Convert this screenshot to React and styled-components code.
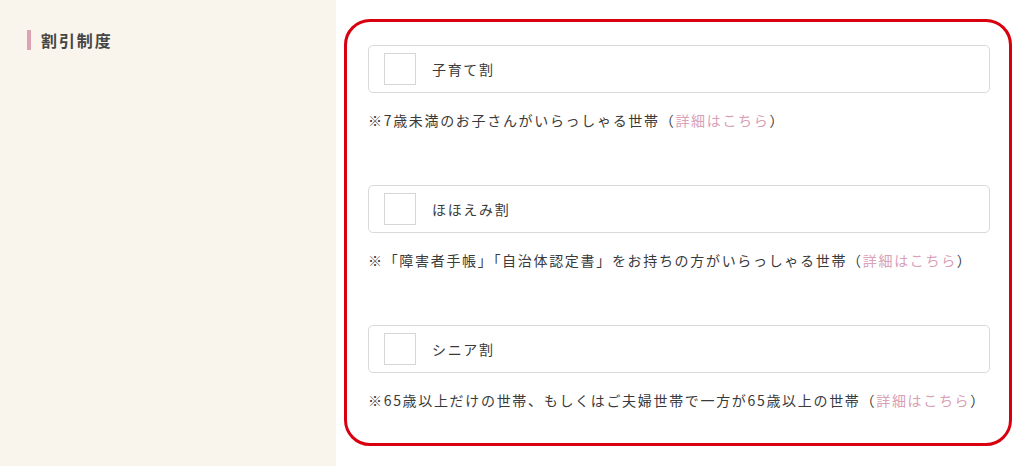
import React from 'react'
import styled, { createGlobalStyle } from 'styled-components'

const Global = createGlobalStyle`
  html, body {
    margin: 0;
    padding: 0;
    background: #fff;
  }
  body {
    font-family: "Noto Sans CJK JP", "Noto Sans", sans-serif;
    color: #3a3a3a;
  }
`

const Page = styled.div`
  display: flex;
  width: 1024px;
  height: 466px;
  overflow: hidden;
`

const Side = styled.aside`
  width: 336px;
  flex-shrink: 0;
  background: #f9f5ec;
  padding: 28px 0 0 27px;
  box-sizing: border-box;
`

const Heading = styled.h2`
  margin: 0;
  display: flex;
  align-items: center;
  gap: 10px;
  font-size: 16px;
  font-weight: 700;
  letter-spacing: 0.12em;
  line-height: 24px;
  color: #454545;

  &::before {
    content: '';
    width: 4px;
    height: 20px;
    background: #dba3b3;
  }
`

const Main = styled.main`
  flex: 1;
  padding: 19px 12px 0 8px;
`

const Frame = styled.div`
  border: 3px solid #d8000f;
  border-radius: 26px;
  height: 427px;
  box-sizing: border-box;
  padding: 23px 19px 0 21px;
  display: flex;
  flex-direction: column;
`

const Option = styled.div`
  & + & {
    margin-top: 54px;
  }
`

const Choice = styled.label`
  display: flex;
  align-items: center;
  gap: 16px;
  height: 48px;
  box-sizing: border-box;
  padding: 0 15px;
  border: 1px solid #d9d9d9;
  border-radius: 5px;
  background: #fff;
  font-size: 14px;
  letter-spacing: 0.12em;
  color: #3a3a3a;
  cursor: pointer;
`

const Box = styled.span`
  width: 32px;
  height: 32px;
  box-sizing: border-box;
  border: 1px solid #d6d6d6;
  background: #fff;
`

const Note = styled.p`
  margin: 16px 0 0;
  font-size: 14px;
  line-height: 22px;
  letter-spacing: 0.12em;
  color: #3a3a3a;
`

const Link = styled.a`
  color: #d9a0b6;
  text-decoration: none;
`

const options = [
  { label: '子育て割', note: '※7歳未満のお子さんがいらっしゃる世帯' },
  { label: 'ほほえみ割', note: '※「障害者手帳」「自治体認定書」をお持ちの方がいらっしゃる世帯' },
  { label: 'シニア割', note: '※65歳以上だけの世帯、もしくはご夫婦世帯で一方が65歳以上の世帯' }
]

export default function App() {
  return (
    <>
      <Global />
      <Page>
        <Side>
          <Heading>割引制度</Heading>
        </Side>
        <Main>
          <Frame>
            {options.map(o => (
              <Option key={o.label}>
                <Choice>
                  <Box />
                  {o.label}
                </Choice>
                <Note>
                  {o.note}（<Link href="#">詳細はこちら</Link>）
                </Note>
              </Option>
            ))}
          </Frame>
        </Main>
      </Page>
    </>
  )
}
